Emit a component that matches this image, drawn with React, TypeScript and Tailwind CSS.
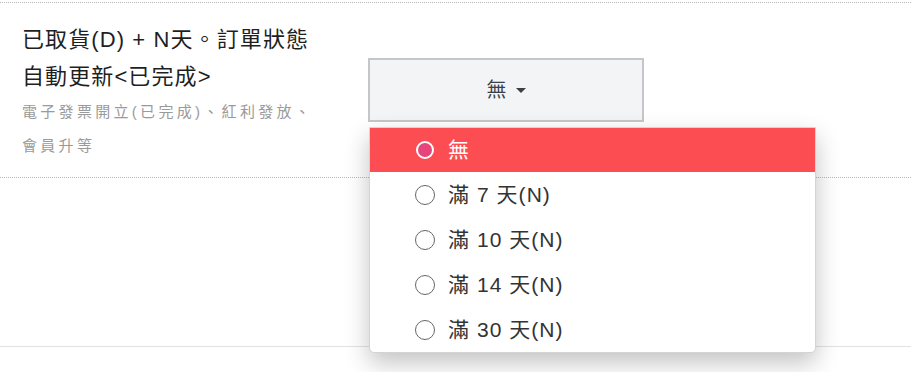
const font = { fontFamily: '"Liberation Sans", "Noto Sans CJK TC", sans-serif' };

const options = ['無', '滿 7 天(N)', '滿 10 天(N)', '滿 14 天(N)', '滿 30 天(N)'];

function Radio({ checked }: { checked: boolean }) {
  if (checked) {
    return (
      <span className="w-[18px] h-[18px] rounded-full border-2 border-white bg-[#e5457a] shrink-0" />
    );
  }
  return <span className="w-[20px] h-[20px] rounded-full border-[1.5px] border-[#666] bg-white shrink-0" />;
}

export default function App() {
  const selected = 0;
  return (
    <div className="w-[911px] h-[372px] bg-white overflow-hidden" style={font}>
      <div className="mt-[2px] border-t border-dotted border-[#b8b8b8]" />
      <div className="flex h-[174px]">
        <div className="w-[368px] pl-[22px] pt-[18px]">
          <div className="text-[22px] leading-[37px] text-[#1f1f1f] tracking-[0.05em]">
            <div>已取貨(D) + N天。訂單狀態</div>
            <div>自動更新&lt;已完成&gt;</div>
          </div>
          <div className="text-[15px] leading-[34px] text-[#9a9a9a] tracking-[0.22em]">
            <div>電子發票開立(已完成)、紅利發放、</div>
            <div>會員升等</div>
          </div>
        </div>
        <div className="relative pt-[55px]">
          <button className="w-[276px] h-[64px] bg-[#f3f4f6] border-2 border-[#c4c6ca] flex items-center justify-center gap-[9px] text-[20px] text-[#3a4048]">
            <span>無</span>
            <span className="w-0 h-0 border-l-[5px] border-r-[5px] border-t-[5px] border-l-transparent border-r-transparent border-t-[#3a4048]" />
          </button>
          <div className="absolute left-[1px] top-[124px] w-[447px] bg-white border border-[#d4d4d4] rounded-b-[5px] shadow-[0_10px_24px_rgba(0,0,0,0.24)] z-10">
            {options.map((o, i) => (
              <div
                key={o}
                className={
                  i === selected
                    ? 'h-[44px] flex items-center pl-[45px] bg-[#fc4e52] text-white text-[21px] tracking-[0.05em]'
                    : 'h-[45px] flex items-center pl-[45px] text-[#333] text-[21px] tracking-[0.05em]'
                }
              >
                <span className="w-[20px] flex justify-center mr-[13px]">
                  <Radio checked={i === selected} />
                </span>
                <span>{o}</span>
              </div>
            ))}
          </div>
        </div>
      </div>
      <div className="border-t border-dotted border-[#b8b8b8]" />
      <div className="h-[168px]" />
      <div className="border-t border-[#e2e2e2]" />
    </div>
  );
}
